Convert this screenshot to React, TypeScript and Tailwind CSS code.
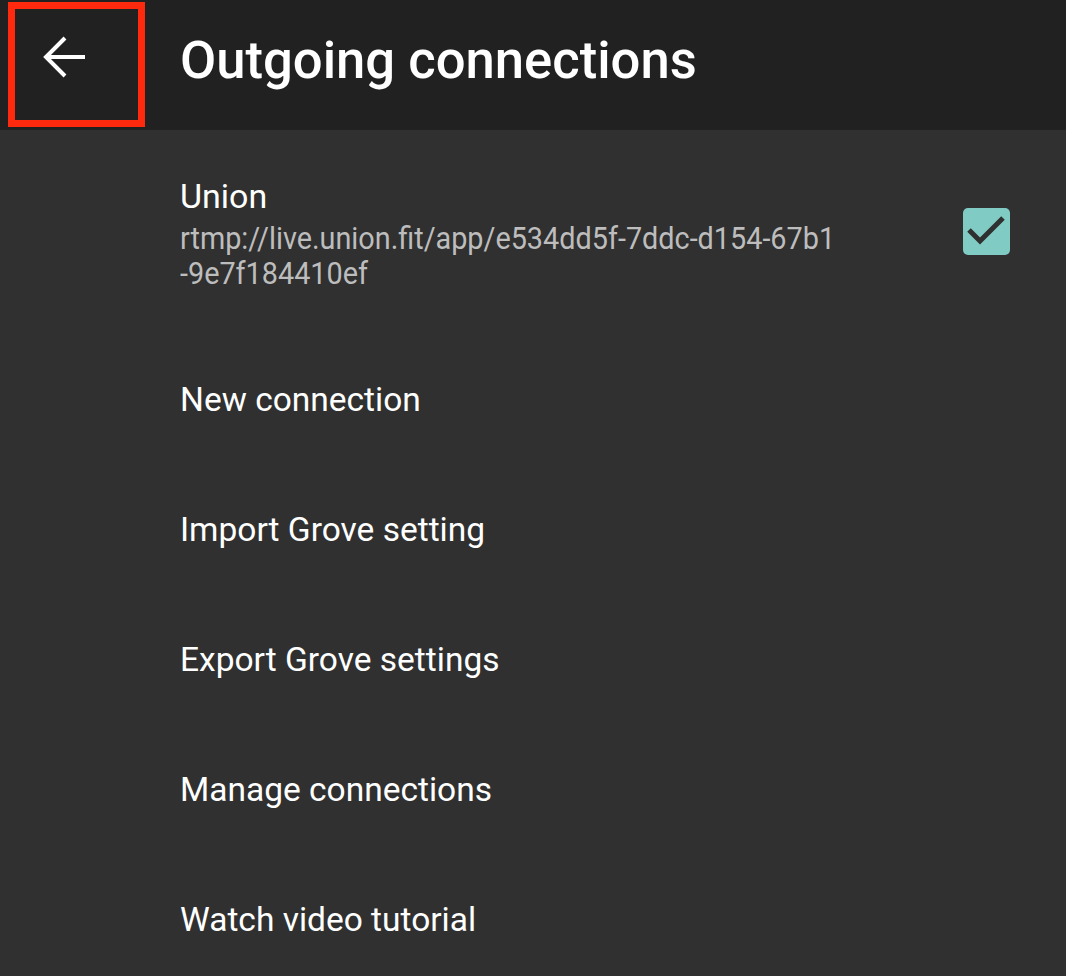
const items = [
  'New connection',
  'Import Grove setting',
  'Export Grove settings',
  'Manage connections',
  'Watch video tutorial',
];

export default function App() {
  return (
    <div
      className="w-[1066px] h-[976px] bg-[#303030] overflow-hidden"
      style={{ fontFamily: 'Roboto, "Noto Sans", sans-serif' }}
    >
      {/* Toolbar */}
      <div className="h-[130px] bg-[#212121] flex items-center relative">
        <div className="w-[128px] h-full flex items-center justify-center pb-[16px]">
          <svg viewBox="0 0 46 44" className="w-[46px] h-[44px]" fill="none" stroke="white" strokeWidth={4}>
            <path d="M44 22H5M24 3L5 22l19 19" />
          </svg>
        </div>
        <h1 className="ml-[52px] text-[52.6px] font-medium text-white -mt-[10px]">
          Outgoing connections
        </h1>
        {/* highlight */}
        <div className="absolute left-[8px] top-[2px] w-[137px] h-[125px] border-[7px] border-[#ff2a0d]" />
      </div>

      {/* Current connection */}
      <div className="h-[205px] pl-[180px] pr-[56px] flex items-start pt-[45px]">
        <div className="flex-1">
          <div className="text-[34px] text-white leading-[42px]">Union</div>
          <div className="text-[32px] text-[#bdbdbd] leading-[35px] mt-[4px] scale-x-[0.9] origin-left whitespace-nowrap">
            rtmp://live.union.fit/app/e534dd5f-7ddc-d154-67b1
            <br />
            -9e7f184410ef
          </div>
        </div>
        <div className="mt-[33px] w-[47px] h-[47px] rounded-[5px] bg-[#80cbc4]">
          <svg viewBox="0 0 47 47" className="w-[47px] h-[47px]" fill="none" stroke="#2f3030" strokeWidth={5}>
            <path d="M6 22l11 11L40 10" />
          </svg>
        </div>
      </div>

      {/* Menu */}
      {items.map((label) => (
        <div key={label} className="h-[130px] pl-[180px] flex items-center">
          <span className="text-[33.5px] text-white">{label}</span>
        </div>
      ))}
    </div>
  );
}
